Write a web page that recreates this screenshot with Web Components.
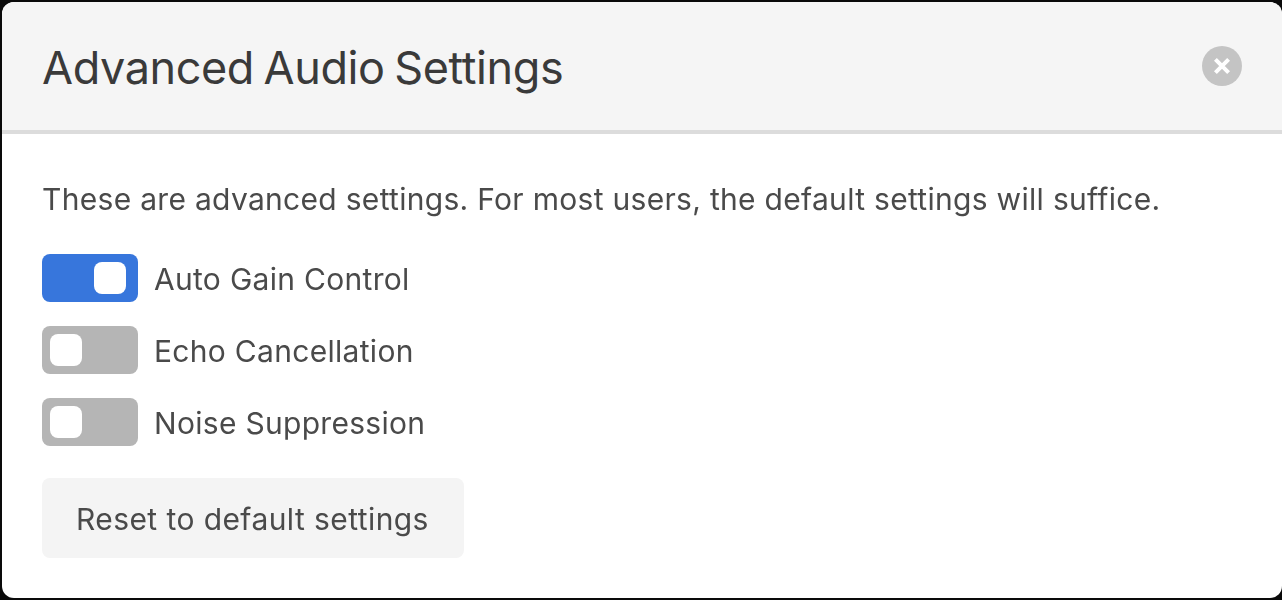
<!DOCTYPE html>
<html>
<head>
<meta charset="utf-8">
<style>
  html, body { margin: 0; height: 100%; background: #0a0a0a; }
  body { padding: 2px 0 2px 2px; box-sizing: border-box; font-family: Inter, "Liberation Sans", sans-serif; overflow: hidden; }
</style>
</head>
<body>
<audio-settings-dialog title-text="Advanced Audio Settings">
  <p>These are advanced settings. For most users, the default settings will suffice.</p>
  <toggle-row checked>Auto Gain Control</toggle-row>
  <toggle-row>Echo Cancellation</toggle-row>
  <toggle-row>Noise Suppression</toggle-row>
  <reset-button>Reset to default settings</reset-button>
</audio-settings-dialog>

<script>
const dialogTemplate = document.createElement('template');
dialogTemplate.innerHTML = `
  <style>
    :host {
      display: flex;
      flex-direction: column;
      height: 100%;
      background: #ffffff;
      border-radius: 12px;
      overflow: hidden;
      will-change: opacity; /* keeps text antialiasing grey */
    }
    .header {
      height: 128px;
      flex: none;
      display: flex;
      align-items: center;
      justify-content: space-between;
      padding: 0 40px;
      background: #f5f5f5;
      border-bottom: 4px solid #dcdcdc;
    }
    h1 {
      margin: 0;
      padding-top: 3px;
      font-size: 45px;
      font-weight: 400;
      letter-spacing: -0.42px;
      word-spacing: -2.5px;
      color: #3a3a3a;
    }
    .close {
      width: 40px;
      height: 40px;
      border-radius: 50%;
      background: #c4c4c4;
      display: flex;
      align-items: center;
      justify-content: center;
    }
    .body {
      padding: 0 40px;
      display: flex;
      flex-direction: column;
      color: #4a4a4a;
      font-size: 30px;
      letter-spacing: 0.3px;
    }
    ::slotted(p) {
      margin: 47px 0 37px;
      line-height: 36px;
    }
  </style>
  <div class="header">
    <h1></h1>
    <div class="close">
      <svg width="18" height="18" viewBox="0 0 18 18"><path d="M2.4 2.4 L15.6 15.6 M15.6 2.4 L2.4 15.6" stroke="#fff" stroke-width="4" fill="none"/></svg>
    </div>
  </div>
  <div class="body"><slot></slot></div>
`;

class AudioSettingsDialog extends HTMLElement {
  constructor() {
    super();
    this.attachShadow({ mode: 'open' });
    this.shadowRoot.appendChild(dialogTemplate.content.cloneNode(true));
    this.shadowRoot.querySelector('h1').textContent = this.getAttribute('title-text') || '';
  }
}

const toggleRowTemplate = document.createElement('template');
toggleRowTemplate.innerHTML = `
  <style>
    :host {
      display: flex;
      align-items: center;
      gap: 16px;
      margin-bottom: 24px;
      color: #4a4a4a;
    }
    .track {
      width: 96px;
      height: 48px;
      flex: none;
      box-sizing: border-box;
      padding: 8px;
      border-radius: 8px;
      background: #b5b5b5;
      display: flex;
      justify-content: flex-start;
    }
    .knob {
      width: 32px;
      height: 32px;
      border-radius: 8px;
      background: #ffffff;
    }
    .label { padding-top: 2px; }
    :host([checked]) .track {
      background: #3776dc;
      justify-content: flex-end;
      padding-right: 12px;
    }
  </style>
  <div class="track"><div class="knob"></div></div>
  <span class="label"><slot></slot></span>
`;

class ToggleRow extends HTMLElement {
  constructor() {
    super();
    this.attachShadow({ mode: 'open' });
    this.shadowRoot.appendChild(toggleRowTemplate.content.cloneNode(true));
  }
}

const resetButtonTemplate = document.createElement('template');
resetButtonTemplate.innerHTML = `
  <style>
    :host {
      display: flex;
      align-self: flex-start;
      align-items: center;
      box-sizing: border-box;
      width: 422px;
      height: 80px;
      padding: 2px 0 0 34px;
      margin-top: 8px;
      border-radius: 8px;
      background: #f4f4f4;
      color: #4a4a4a;
      letter-spacing: 0.42px;
    }
  </style>
  <slot></slot>
`;

class ResetButton extends HTMLElement {
  constructor() {
    super();
    this.attachShadow({ mode: 'open' });
    this.shadowRoot.appendChild(resetButtonTemplate.content.cloneNode(true));
  }
}

customElements.define('audio-settings-dialog', AudioSettingsDialog);
customElements.define('toggle-row', ToggleRow);
customElements.define('reset-button', ResetButton);
</script>
</body>
</html>
